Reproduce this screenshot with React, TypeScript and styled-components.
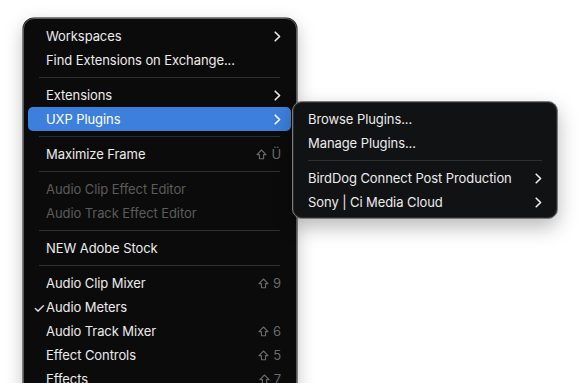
import React from "react";
import styled, { createGlobalStyle } from "styled-components";

const Global = createGlobalStyle`
  html, body { margin: 0; padding: 0; background: #ffffff; overflow: hidden; }
  body { font-family: Inter, "Noto Sans", "Liberation Sans", sans-serif; }
`;

const Page = styled.div`
  width: 582px;
  height: 383px;
  padding: 18px 0 0 23px;
  box-sizing: border-box;
  overflow: hidden;
`;

const Menu = styled.div`
  position: relative;
  width: 274px;
  box-sizing: border-box;
  background: #0b0b0b;
  border: 1px solid #5a5a5a;
  border-radius: 11px;
  padding: 5px 5px 8px 4px;
  box-shadow: 0 0 0 0.5px #1a1a1a, 0 6px 18px rgba(0,0,0,0.25);
`;

const SubMenu = styled.div`
  position: absolute;
  left: 264px;
  top: -6px;
  width: 266px;
  box-sizing: border-box;
  background: #111214;
  border: 1px solid #7c7c7c;
  border-radius: 10px;
  padding: 5px 5px 4px 5px;
  box-shadow: inset 0 0 0 1px #2a2a2c, 0 8px 20px rgba(0,0,0,0.28);
  z-index: 2;
`;

const Row = styled.div<{ $active?: boolean; $disabled?: boolean; $pad?: number }>`
  position: relative;
  height: 24px;
  display: flex;
  align-items: center;
  padding: 0 10px 0 ${(p) => p.$pad ?? 18}px;
  border-radius: 5px;
  font-size: 13px;
  letter-spacing: -0.08px;
  color: ${(p) => (p.$disabled ? "#5b5b5b" : "#ececec")};
  background: ${(p) => (p.$active ? "#3d7fdd" : "transparent")};
  ${(p) => (p.$active ? "color: #ffffff;" : "")}
  white-space: nowrap;
`;

const Label = styled.span`
  flex: 1;
`;

const Check = styled.span`
  position: absolute;
  left: 5px;
  top: 0;
  height: 24px;
  display: flex;
  align-items: center;
  font-size: 14px;
  color: #ececec;
`;

const Shortcut = styled.span`
  color: #6a6a6a;
  font-size: 13px;
  display: flex;
  align-items: center;
  gap: 4px;
`;

const Sep = styled.div<{ $inset?: number }>`
  height: 1px;
  background: #2f2f2f;
  margin: 5px ${(p) => p.$inset ?? 11}px 5px ${(p) => p.$inset ?? 11}px;
`;

const Chevron = () => (
  <svg width="7" height="11" viewBox="0 0 7 11" fill="none">
    <path d="M1.2 1.2 L5.6 5.5 L1.2 9.8" stroke="currentColor" strokeWidth="1.6" strokeLinecap="round" strokeLinejoin="round" />
  </svg>
);

const ShiftIcon = () => (
  <svg width="11" height="11" viewBox="0 0 11 11" fill="none">
    <path d="M5.5 1 L10 5.6 H7.6 V9.8 H3.4 V5.6 H1 Z" stroke="currentColor" strokeWidth="1.1" strokeLinejoin="round" />
  </svg>
);

const Sc = ({ k }: { k: string }) => (
  <Shortcut>
    <ShiftIcon />
    <span>{k}</span>
  </Shortcut>
);

export default function App() {
  return (
    <Page>
      <Global />
      <Menu>
        <Row>
          <Label>Workspaces</Label>
          <Chevron />
        </Row>
        <Row>
          <Label>Find Extensions on Exchange...</Label>
        </Row>
        <Sep />
        <Row>
          <Label>Extensions</Label>
          <Chevron />
        </Row>
        <Row $active>
          <Label>UXP Plugins</Label>
          <Chevron />
          <SubMenu>
            <Row $pad={10}>
              <Label>Browse Plugins...</Label>
            </Row>
            <Row $pad={10}>
              <Label>Manage Plugins...</Label>
            </Row>
            <Sep $inset={10} />
            <Row $pad={10}>
              <Label>BirdDog Connect Post Production</Label>
              <Chevron />
            </Row>
            <Row $pad={10}>
              <Label>Sony | Ci Media Cloud</Label>
              <Chevron />
            </Row>
          </SubMenu>
        </Row>
        <Sep />
        <Row>
          <Label>Maximize Frame</Label>
          <Sc k="Ü" />
        </Row>
        <Sep />
        <Row $disabled>
          <Label>Audio Clip Effect Editor</Label>
        </Row>
        <Row $disabled>
          <Label>Audio Track Effect Editor</Label>
        </Row>
        <Sep />
        <Row>
          <Label>NEW Adobe Stock</Label>
        </Row>
        <Sep />
        <Row>
          <Label>Audio Clip Mixer</Label>
          <Sc k="9" />
        </Row>
        <Row>
          <Check>✓</Check>
          <Label>Audio Meters</Label>
        </Row>
        <Row>
          <Label>Audio Track Mixer</Label>
          <Sc k="6" />
        </Row>
        <Row>
          <Label>Effect Controls</Label>
          <Sc k="5" />
        </Row>
        <Row>
          <Label>Effects</Label>
          <Sc k="7" />
        </Row>
      </Menu>
    </Page>
  );
}
